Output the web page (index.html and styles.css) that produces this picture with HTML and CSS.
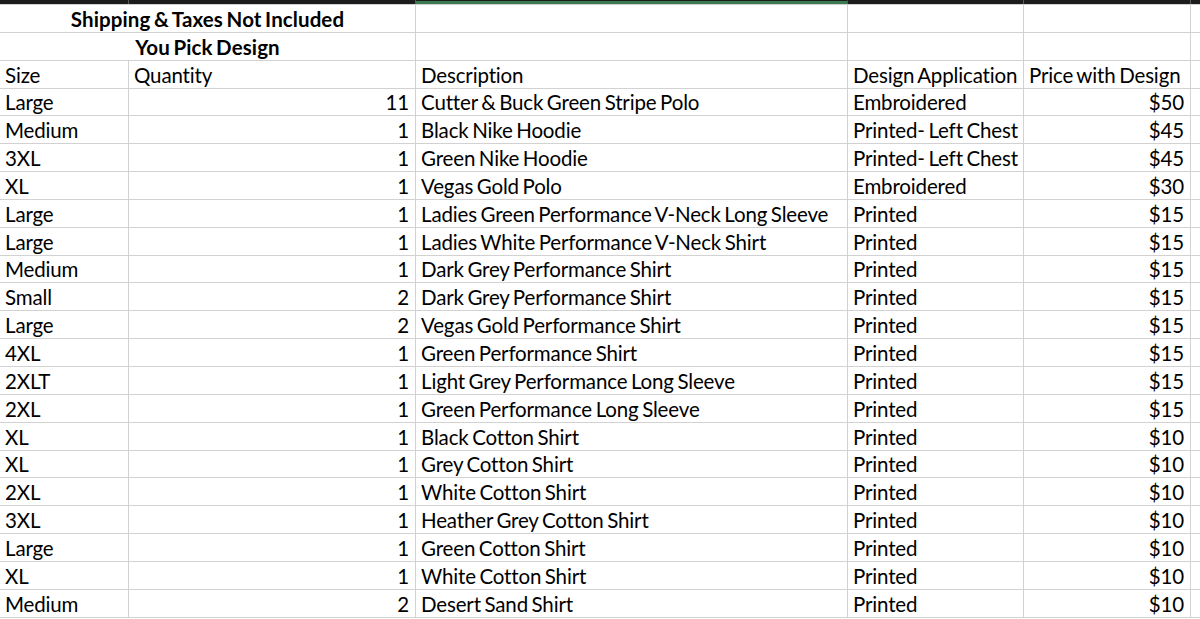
FILE: index.html
```html
<!DOCTYPE html>
<html>
<head>
<meta charset="utf-8">
<link rel="stylesheet" href="styles.css">
</head>
<body>
<div class="colbar">
  <div class="hd hd-a"></div>
  <div class="hd hd-b"></div>
  <div class="hd hd-c sel"></div>
  <div class="hd hd-d"></div>
  <div class="hd hd-e"></div>
  <div class="hd hd-f"></div>
</div>
<div class="sheet">
  <div class="c span2 title">Shipping &amp; Taxes Not Included</div><div class="c"></div><div class="c"></div><div class="c"></div><div class="c last"></div>
  <div class="c span2 title">You Pick Design</div><div class="c"></div><div class="c"></div><div class="c"></div><div class="c last"></div>
  <div class="c">Size</div><div class="c">Quantity</div><div class="c">Description</div><div class="c">Design Application</div><div class="c">Price with Design</div><div class="c last"></div>
  <div class="c">Large</div><div class="c r">11</div><div class="c">Cutter &amp; Buck Green Stripe Polo</div><div class="c">Embroidered</div><div class="c r">$50</div><div class="c last"></div>
  <div class="c">Medium</div><div class="c r">1</div><div class="c">Black Nike Hoodie</div><div class="c">Printed- Left Chest</div><div class="c r">$45</div><div class="c last"></div>
  <div class="c">3XL</div><div class="c r">1</div><div class="c">Green Nike Hoodie</div><div class="c">Printed- Left Chest</div><div class="c r">$45</div><div class="c last"></div>
  <div class="c">XL</div><div class="c r">1</div><div class="c">Vegas Gold Polo</div><div class="c">Embroidered</div><div class="c r">$30</div><div class="c last"></div>
  <div class="c">Large</div><div class="c r">1</div><div class="c">Ladies Green Performance V-Neck Long Sleeve</div><div class="c">Printed</div><div class="c r">$15</div><div class="c last"></div>
  <div class="c">Large</div><div class="c r">1</div><div class="c">Ladies White Performance V-Neck Shirt</div><div class="c">Printed</div><div class="c r">$15</div><div class="c last"></div>
  <div class="c">Medium</div><div class="c r">1</div><div class="c">Dark Grey Performance Shirt</div><div class="c">Printed</div><div class="c r">$15</div><div class="c last"></div>
  <div class="c">Small</div><div class="c r">2</div><div class="c">Dark Grey Performance Shirt</div><div class="c">Printed</div><div class="c r">$15</div><div class="c last"></div>
  <div class="c">Large</div><div class="c r">2</div><div class="c">Vegas Gold Performance Shirt</div><div class="c">Printed</div><div class="c r">$15</div><div class="c last"></div>
  <div class="c">4XL</div><div class="c r">1</div><div class="c">Green Performance Shirt</div><div class="c">Printed</div><div class="c r">$15</div><div class="c last"></div>
  <div class="c">2XLT</div><div class="c r">1</div><div class="c">Light Grey Performance Long Sleeve</div><div class="c">Printed</div><div class="c r">$15</div><div class="c last"></div>
  <div class="c">2XL</div><div class="c r">1</div><div class="c">Green Performance Long Sleeve</div><div class="c">Printed</div><div class="c r">$15</div><div class="c last"></div>
  <div class="c">XL</div><div class="c r">1</div><div class="c">Black Cotton Shirt</div><div class="c">Printed</div><div class="c r">$10</div><div class="c last"></div>
  <div class="c">XL</div><div class="c r">1</div><div class="c">Grey Cotton Shirt</div><div class="c">Printed</div><div class="c r">$10</div><div class="c last"></div>
  <div class="c">2XL</div><div class="c r">1</div><div class="c">White Cotton Shirt</div><div class="c">Printed</div><div class="c r">$10</div><div class="c last"></div>
  <div class="c">3XL</div><div class="c r">1</div><div class="c">Heather Grey Cotton Shirt</div><div class="c">Printed</div><div class="c r">$10</div><div class="c last"></div>
  <div class="c">Large</div><div class="c r">1</div><div class="c">Green Cotton Shirt</div><div class="c">Printed</div><div class="c r">$10</div><div class="c last"></div>
  <div class="c">XL</div><div class="c r">1</div><div class="c">White Cotton Shirt</div><div class="c">Printed</div><div class="c r">$10</div><div class="c last"></div>
  <div class="c">Medium</div><div class="c r">2</div><div class="c">Desert Sand Shirt</div><div class="c">Printed</div><div class="c r">$10</div><div class="c last"></div>
</div>
</body>
</html>
```

FILE: styles.css
```css
html, body {
  margin: 0;
  padding: 0;
  background: #ffffff;
}
body {
  width: 1200px;
  height: 619px;
  overflow: hidden;
  font-family: Lato, "Open Sans", sans-serif;
  font-size: 20.5px;
  color: #000000;
}
.colbar {
  display: grid;
  grid-template-columns: 129px 287px 432px 176px 167px 9px;
  height: 4px;
}
.hd {
  background: #1c1c1c;
  border-right: 1px solid #5a5a5a;
  box-sizing: border-box;
}
.hd.sel {
  background: #3e7a50;
  border-top: 1px solid #1c1c1c;
}
.hd-f {
  border-right: none;
}
.sheet {
  display: grid;
  grid-template-columns: 129px 287px 432px 176px 167px 9px;
  grid-template-rows: repeat(22, 27.85px);
  border-top: 1px solid #cfcfcf;
}
.c {
  box-sizing: border-box;
  border-right: 1px solid #d2d2d2;
  border-bottom: 1px solid #d2d2d2;
  display: flex;
  align-items: flex-end;
  padding: 0 5px 1px 5px;
  line-height: 24px;
  white-space: nowrap;
  overflow: visible;
  letter-spacing: -0.15px;
  word-spacing: -1.5px;
}
.c.r {
  justify-content: flex-end;
  padding-right: 6px;
}
.c.last {
  border-right: none;
}
.span2 {
  grid-column: span 2;
}
.title {
  justify-content: center;
  font-weight: 700;
  letter-spacing: 0.1px;
}
```
